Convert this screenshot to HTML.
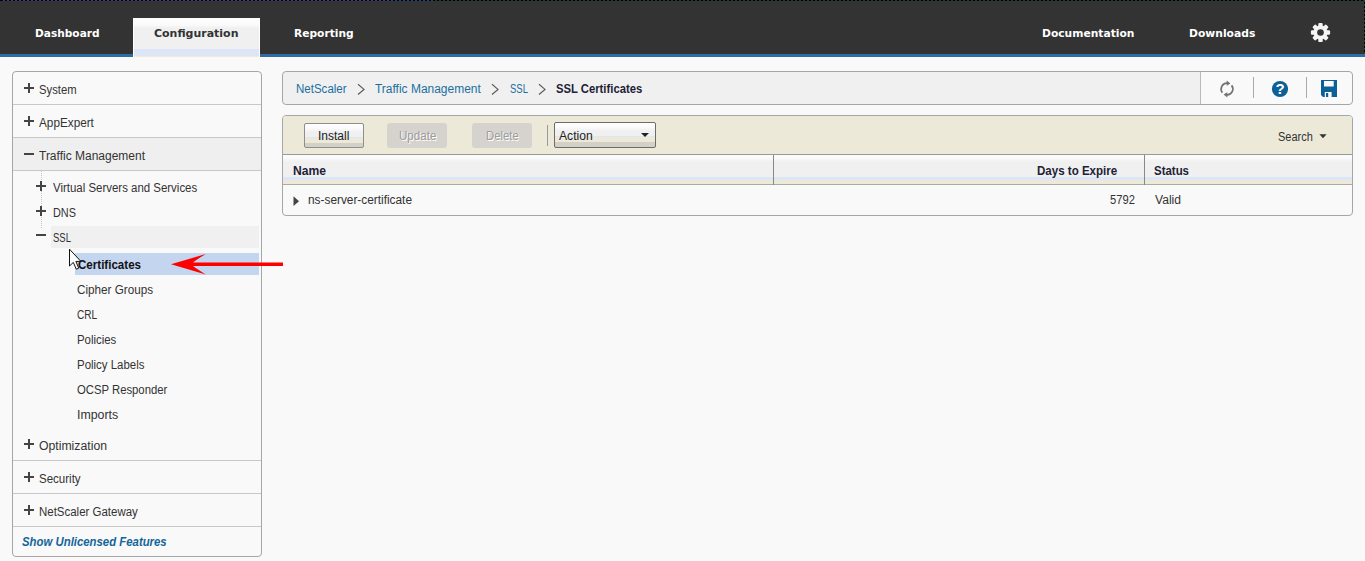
<!DOCTYPE html>
<html><head><meta charset="utf-8"><title>SSL Certificates</title>
<style>
*{box-sizing:border-box;margin:0;padding:0}
html,body{width:1365px;height:561px;overflow:hidden;background:#f9f9f9;font-family:"Liberation Sans",sans-serif;font-size:12px;color:#333}
.abs{position:absolute}
#top{position:absolute;left:0;top:0;width:1365px;height:57px;background:#333}
#topdash{position:absolute;left:0;top:0;width:1365px;height:1px;background:repeating-linear-gradient(90deg,#000 0 2px,transparent 2px 4px) 1px 0,linear-gradient(90deg,#40398c 0 392px,#184288 392px 433px,#0b3f32 433px)}
#rdash{position:absolute;left:1364px;top:0;width:1px;height:54px;background:repeating-linear-gradient(180deg,#0c4a3a 0 2px,#000 2px 4px)}
#blue{position:absolute;left:0;top:54px;width:1365px;height:3px;background:#2e6ca3}
.nav{position:absolute;transform-origin:0 50%;font-family:"DejaVu Sans",sans-serif;font-weight:bold;font-size:11px;color:#fff;white-space:nowrap;line-height:14px;}
#tab{position:absolute;left:133px;top:18px;width:127px;height:39px;background:linear-gradient(#fdfdfd 0,#fafafa 7px,#f0f0f0 10px,#f0f0f0 31px,#dce6f7 31px,#dce6f7 38px,#f3ead6 38px);border-left:1px solid #fff;border-right:1px solid #fff}
#left{position:absolute;left:12px;top:71px;width:250px;height:486px;border:1px solid #a6a6a6;border-radius:4px;background:#f9f9f9}
.hl{position:absolute;left:13px;width:248px;height:1px;background:#c8c8c8}
.t{position:absolute;transform-origin:0 50%;white-space:nowrap;line-height:16px;font-size:12px;color:#333}
.pm{position:absolute;width:10px;height:10px;margin-top:-1px}
.pm:before{content:"";position:absolute;left:0;top:4px;width:10px;height:2px;background:#444}
.pm.p:after{content:"";position:absolute;left:4px;top:0;width:2px;height:10px;background:#444}
#bc{position:absolute;left:282px;top:71px;width:1071px;height:34px;border:1px solid #a6a6a6;border-radius:4px;background:linear-gradient(90deg,#f0f0f0 0 917px,#f9f9f9 917px)}
.link{color:#1b6d9c}
#tb{position:absolute;left:282px;top:115px;width:1071px;height:101px;border:1px solid #a6a6a6;border-radius:4px;background:#f9f9f9;overflow:hidden}
#tbar{position:absolute;left:0;top:0;width:100%;height:39px;background:#ece9d8;border-bottom:1px solid #999}
#th{position:absolute;left:0;top:39px;width:100%;height:30px;background:linear-gradient(#fdfdfd 0,#fafafa 3px,#f0f0f0 7px,#f0f0f0 22px,#dce6f7 22px,#dce6f7 25px,#ece9d8 25px,#ece9d8 29px,#aaa 29px)}
.btn{position:absolute;top:7px;height:25px;border:1px solid #8e8e8e;border-radius:2px;text-align:center;line-height:22px;font-size:12px;color:#222;background:linear-gradient(#fefefe 0,#fbfbfb 4px,#f0f0f0 8px,#f0f0f0 13px,#dce6f7 13px,#dce6f7 14px,#ece9d8 14px,#ece9d8 19px,#d4d0c8 19px)}
.btn.dis{border:0;border-radius:3px;background:#d6d3ce;color:#a9a9a9;text-shadow:1px 1px 0 #f4f4f4;line-height:24px}
</style></head><body>
<div id="top"></div><div id="blue"></div><div id="topdash"></div><div id="rdash"></div>
<div id="tab"></div>
<svg class="abs" style="left:1310px;top:22px" width="21" height="21" viewBox="-10.5 -10.5 21 21"><g fill="#f4f4f4"><circle cx="0" cy="0" r="7.1"/><rect x="-2.2" y="-9.6" width="4.4" height="19.2" rx="1.2"/><rect x="-2.2" y="-9.6" width="4.4" height="19.2" rx="1.2" transform="rotate(45)"/><rect x="-2.2" y="-9.6" width="4.4" height="19.2" rx="1.2" transform="rotate(90)"/><rect x="-2.2" y="-9.6" width="4.4" height="19.2" rx="1.2" transform="rotate(135)"/></g><circle cx="0" cy="0" r="3.3" fill="#333"/></svg>
<div id="left"></div>
<div class="abs" style="left:13px;top:138px;width:248px;height:32px;background:#efefef"></div>
<div class="hl" style="top:104px"></div><div class="hl" style="top:137px"></div><div class="hl" style="top:170px"></div>
<div class="hl" style="top:460px"></div><div class="hl" style="top:493px"></div><div class="hl" style="top:526px"></div>
<div class="abs" style="left:51px;top:226px;width:208px;height:22px;background:#f0f0f0"></div>
<div class="abs" style="left:75px;top:253px;width:184px;height:22px;background:#c4d5ef"></div>
<div class="abs" style="left:41px;top:171px;width:0;height:57px;border-left:1px dotted #c4c4c4"></div>
<div class="pm p" style="left:24px;top:84px"></div>
<div class="pm p" style="left:24px;top:117px"></div>
<div class="pm" style="left:24px;top:150px"></div>
<div class="pm p" style="left:36px;top:182px"></div>
<div class="pm p" style="left:36px;top:207px"></div>
<div class="pm" style="left:36px;top:231px"></div>
<div class="pm p" style="left:24px;top:440px"></div>
<div class="pm p" style="left:24px;top:473px"></div>
<div class="pm p" style="left:24px;top:506px"></div>
<svg class="abs" style="left:165px;top:250px" width="125" height="30" viewBox="165 250 125 30"><path d="M171 264.3 L205.8 254 Q196 260 193 262.5 L283 262.5 L283 266.1 L193 266.1 Q196 268.5 205.8 274.6 Z" fill="#f00"/></svg>

<div id="bc"></div>
<svg class="abs" style="left:355px;top:83px" width="200" height="13" viewBox="0 0 200 13" fill="none" stroke="#5c5c5c" stroke-width="1.2"><path d="M3 1.3 L9 6.4 L3 11.500"/><path d="M137 1.3 L143 6.4 L137 11.5"/><path d="M184 1.3 L190 6.4 L184 11.500"/></svg>
<div class="abs" style="left:1200px;top:72px;width:1px;height:32px;background:#bbb"></div>
<div class="abs" style="left:1253px;top:77px;width:1px;height:21px;background:#aaa"></div>
<div class="abs" style="left:1306px;top:77px;width:1px;height:21px;background:#aaa"></div>
<svg class="abs" style="left:1218px;top:80px" width="18" height="18" viewBox="-9 -9 18 18"><g fill="none" stroke="#727272" stroke-width="1.7"><path d="M-4.6 3.6 A5.8 5.8 0 0 1 0.2 -5.8"/><path d="M4.6 -3.6 A5.8 5.8 0 0 1 -0.2 5.8"/></g><path d="M-0.3 -8.4 L3.4 -5.6 L-0.3 -3.2 Z" fill="#727272"/><path d="M0.3 8.4 L-3.4 5.6 L0.3 3.2 Z" fill="#727272"/></svg>
<svg class="abs" style="left:1271px;top:80px" width="18" height="18" viewBox="-9 -9 18 18"><circle cx="0" cy="0" r="8.1" fill="#0d5f96"/><text x="0" y="5.2" text-anchor="middle" font-family="Liberation Sans, sans-serif" font-weight="bold" font-size="15" fill="#fff">?</text></svg>
<svg class="abs" style="left:1321px;top:80px" width="16" height="17" viewBox="0 0 16 17"><path d="M0 0 H16 V17 H2 L0 15 Z" fill="#0d5f96"/><rect x="3" y="1" width="9.7" height="5.5" fill="#f9f9f9"/><rect x="3.8" y="12" width="6.8" height="5" fill="#f9f9f9"/><rect x="5" y="13" width="2.2" height="4" fill="#0d5f96"/></svg>
<div id="tb">
 <div id="tbar"></div>
 <div class="btn" style="left:21px;width:60px"></div>
 <div class="btn dis" style="left:104px;width:60px"></div>
 <div class="btn dis" style="left:189px;width:60px"></div>
 <div class="abs" style="left:264px;top:9px;width:1px;height:21px;background:#999"></div>
 <div class="btn" style="left:271px;top:6px;width:102px;height:26px;text-align:left;padding-left:4px;border-color:#6c6c6c;border-radius:2px"></div>
 <div class="abs" style="left:358px;top:17px;width:0;height:0;border-left:4px solid transparent;border-right:4px solid transparent;border-top:4px solid #222"></div>
 
 <svg class="abs" style="left:1036px;top:18px" width="8" height="5" viewBox="0 0 8 5"><path d="M0.4 0.2 H7.6 L4 4.2 Z" fill="#333"/></svg>
 <div id="th"></div>
 <div class="abs" style="left:490px;top:39px;width:1px;height:30px;background:#888"></div>
 <div class="abs" style="left:861px;top:39px;width:1px;height:30px;background:#888"></div>
 
 
 
 <svg class="abs" style="left:10px;top:80px" width="7" height="11" viewBox="0 0 7 11"><path d="M0.5 0.3 L6 5.2 L0.5 10.1 Z" fill="#444"/></svg>
 
 
 
</div>
<div class="nav" style="left:34.9px;top:27px;transform:scaleX(0.9628);">Dashboard</div>
<div class="nav" style="left:154px;top:27px;transform:scaleX(0.9989);color:#333">Configuration</div>
<div class="nav" style="left:293.6px;top:27px;transform:scaleX(0.9686);">Reporting</div>
<div class="nav" style="left:1042px;top:27px;transform:scaleX(0.9746);">Documentation</div>
<div class="nav" style="left:1189.2px;top:27px;transform:scaleX(0.9770);">Downloads</div>
<div class="t" style="left:38.9px;top:82px;transform:scaleX(0.9396);">System</div>
<div class="t" style="left:38.9px;top:115px;transform:scaleX(0.9795);">AppExpert</div>
<div class="t" style="left:38.9px;top:148px;transform:scaleX(0.9994);">Traffic Management</div>
<div class="t" style="left:53.2px;top:180px;transform:scaleX(0.9538);">Virtual Servers and Services</div>
<div class="t" style="left:53.2px;top:205px;transform:scaleX(0.9075);">DNS</div>
<div class="t" style="left:53.2px;top:230px;transform:scaleX(0.7934);">SSL</div>
<div class="t" style="left:77.5px;top:257px;transform:scaleX(0.9637);font-weight:bold;color:#111">Certificates</div>
<div class="t" style="left:76.8px;top:282px;transform:scaleX(0.9738);">Cipher Groups</div>
<div class="t" style="left:76.8px;top:307px;transform:scaleX(0.8411);">CRL</div>
<div class="t" style="left:76.8px;top:332px;transform:scaleX(0.9502);">Policies</div>
<div class="t" style="left:76.8px;top:357px;transform:scaleX(0.9531);">Policy Labels</div>
<div class="t" style="left:76.8px;top:382px;transform:scaleX(0.9422);">OCSP Responder</div>
<div class="t" style="left:76.8px;top:407px;transform:scaleX(1.0296);">Imports</div>
<div class="t" style="left:39.3px;top:438px;transform:scaleX(1.0194);">Optimization</div>
<div class="t" style="left:39.3px;top:471px;transform:scaleX(0.9594);">Security</div>
<div class="t" style="left:39.3px;top:504px;transform:scaleX(0.9556);">NetScaler Gateway</div>
<div class="t" style="left:22.4px;top:534px;transform:scaleX(0.9475);font-weight:bold;font-style:italic;color:#14659a">Show Unlicensed Features</div>
<div class="t" style="left:296.2px;top:81px;transform:scaleX(0.9604);color:#1b6f9f">NetScaler</div>
<div class="t" style="left:375.1px;top:81px;transform:scaleX(0.9975);color:#1b6f9f">Traffic Management</div>
<div class="t" style="left:509.9px;top:81px;transform:scaleX(0.7890);color:#1b6f9f">SSL</div>
<div class="t" style="left:555.8px;top:81px;transform:scaleX(0.9387);font-weight:bold;color:#1e2236">SSL Certificates</div>
<div class="t" style="left:318.1px;top:128px;transform:scaleX(1.0013);color:#222">Install</div>
<div class="t" style="left:398.7px;top:128px;transform:scaleX(0.9663);color:#9c9c9c;text-shadow:1px 1px 0 #fff">Update</div>
<div class="t" style="left:485.6px;top:128px;transform:scaleX(0.9427);color:#9c9c9c;text-shadow:1px 1px 0 #fff">Delete</div>
<div class="t" style="left:559.1px;top:128px;transform:scaleX(1.0102);color:#222">Action</div>
<div class="t" style="left:1277.5px;top:129px;transform:scaleX(0.9150);">Search</div>
<div class="t" style="left:292.5px;top:163px;transform:scaleX(1.0096);font-weight:bold;color:#1e2236">Name</div>
<div class="t" style="left:1037.4px;top:163px;transform:scaleX(0.9619);font-weight:bold;color:#1e2236">Days to Expire</div>
<div class="t" style="left:1153.7px;top:163px;transform:scaleX(0.9540);font-weight:bold;color:#1e2236">Status</div>
<div class="t" style="left:308.4px;top:192px;transform:scaleX(0.9871);">ns-server-certificate</div>
<div class="t" style="left:1109.6px;top:192px;transform:scaleX(0.9325);">5792</div>
<div class="t" style="left:1155.1px;top:192px;transform:scaleX(1.0079);">Valid</div>
<svg class="abs" style="left:68px;top:248px" width="15" height="24" viewBox="0 0 15 24"><path d="M1.5 1.2 L1.5 18 L5.3 14.4 L8.3 21.2 L10.7 20.2 L7.9 13.4 L12.9 13.4 Z" fill="#fff" stroke="#111" stroke-width="1"/></svg>
<div class="abs" style="left:1363px;top:57px;width:2px;height:504px;background:#fbfbfb"></div>
</body></html>
